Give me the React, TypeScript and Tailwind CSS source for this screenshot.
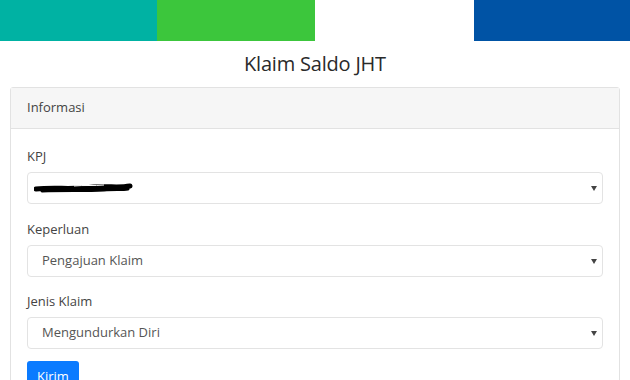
import React from "react";

function Caret() {
  return (
    <svg width="6" height="5" viewBox="0 0 6 5" className="shrink-0">
      <path d="M0 0 L6 0 L3 5 Z" fill="#444" />
    </svg>
  );
}

function Select({ children }: { children: React.ReactNode }) {
  return (
    <div className="h-[32px] border border-[#e3e3e3] rounded-[4px] bg-white flex items-center justify-between pl-[14px] pr-[5px] text-[13px] text-[#555]">
      <div className="flex items-center">{children}</div>
      <Caret />
    </div>
  );
}

export default function App() {
  return (
    <div className="w-[630px] h-[380px] overflow-hidden bg-white" style={{ fontFamily: '"Open Sans", "Noto Sans", sans-serif' }}>
      <div className="flex h-[41px]">
        <div className="w-[157px] bg-[#00b2a3]" />
        <div className="w-[158px] bg-[#3cc63c]" />
        <div className="w-[159px] bg-white" />
        <div className="flex-1 bg-[#0053a5]" />
      </div>
      <div className="h-[46px] flex items-center justify-center pb-[1px]">
        <h1 className="text-[20px] text-[#2a2a2a] tracking-[-0.2px]">Klaim Saldo JHT</h1>
      </div>
      <div className="mx-[10px] border border-[#e2e2e2] rounded-t-[3px]">
        <div className="h-[41px] bg-[#f6f6f6] border-b border-[#e2e2e2] flex items-center px-[16px] text-[13px] text-[#444]">
          Informasi
        </div>
        <div className="px-[16px] pt-[18px]">
          <div className="text-[13px] text-[#444] mb-[7px] leading-[18px]">KPJ</div>
          <Select>
            <svg width="100" height="14" viewBox="0 0 100 14" className="-ml-[8px]">
              <path d="M2 8 C20 6 40 9 60 6 C75 5 85 7 96 5" stroke="#000" strokeWidth="5" fill="none" strokeLinecap="round" />
              <path d="M8 10 C30 9 50 10 70 9 C80 8 88 9 94 8" stroke="#000" strokeWidth="3" fill="none" strokeLinecap="round" />
              <path d="M40 5 C50 4 60 5 70 4" stroke="#fff" strokeWidth="1" fill="none" />
            </svg>
          </Select>
          <div className="text-[13px] text-[#444] mt-[16px] mb-[7px] leading-[18px]">Keperluan</div>
          <Select>Pengajuan Klaim</Select>
          <div className="text-[13px] text-[#444] mt-[15px] mb-[7px] leading-[18px]">Jenis Klaim</div>
          <Select>Mengundurkan Diri</Select>
          <div className="mt-[12px]">
            <button className="h-[32px] px-[10px] bg-[#0b7bff] rounded-[3px] text-white text-[13px]">Kirim</button>
          </div>
        </div>
      </div>
    </div>
  );
}
